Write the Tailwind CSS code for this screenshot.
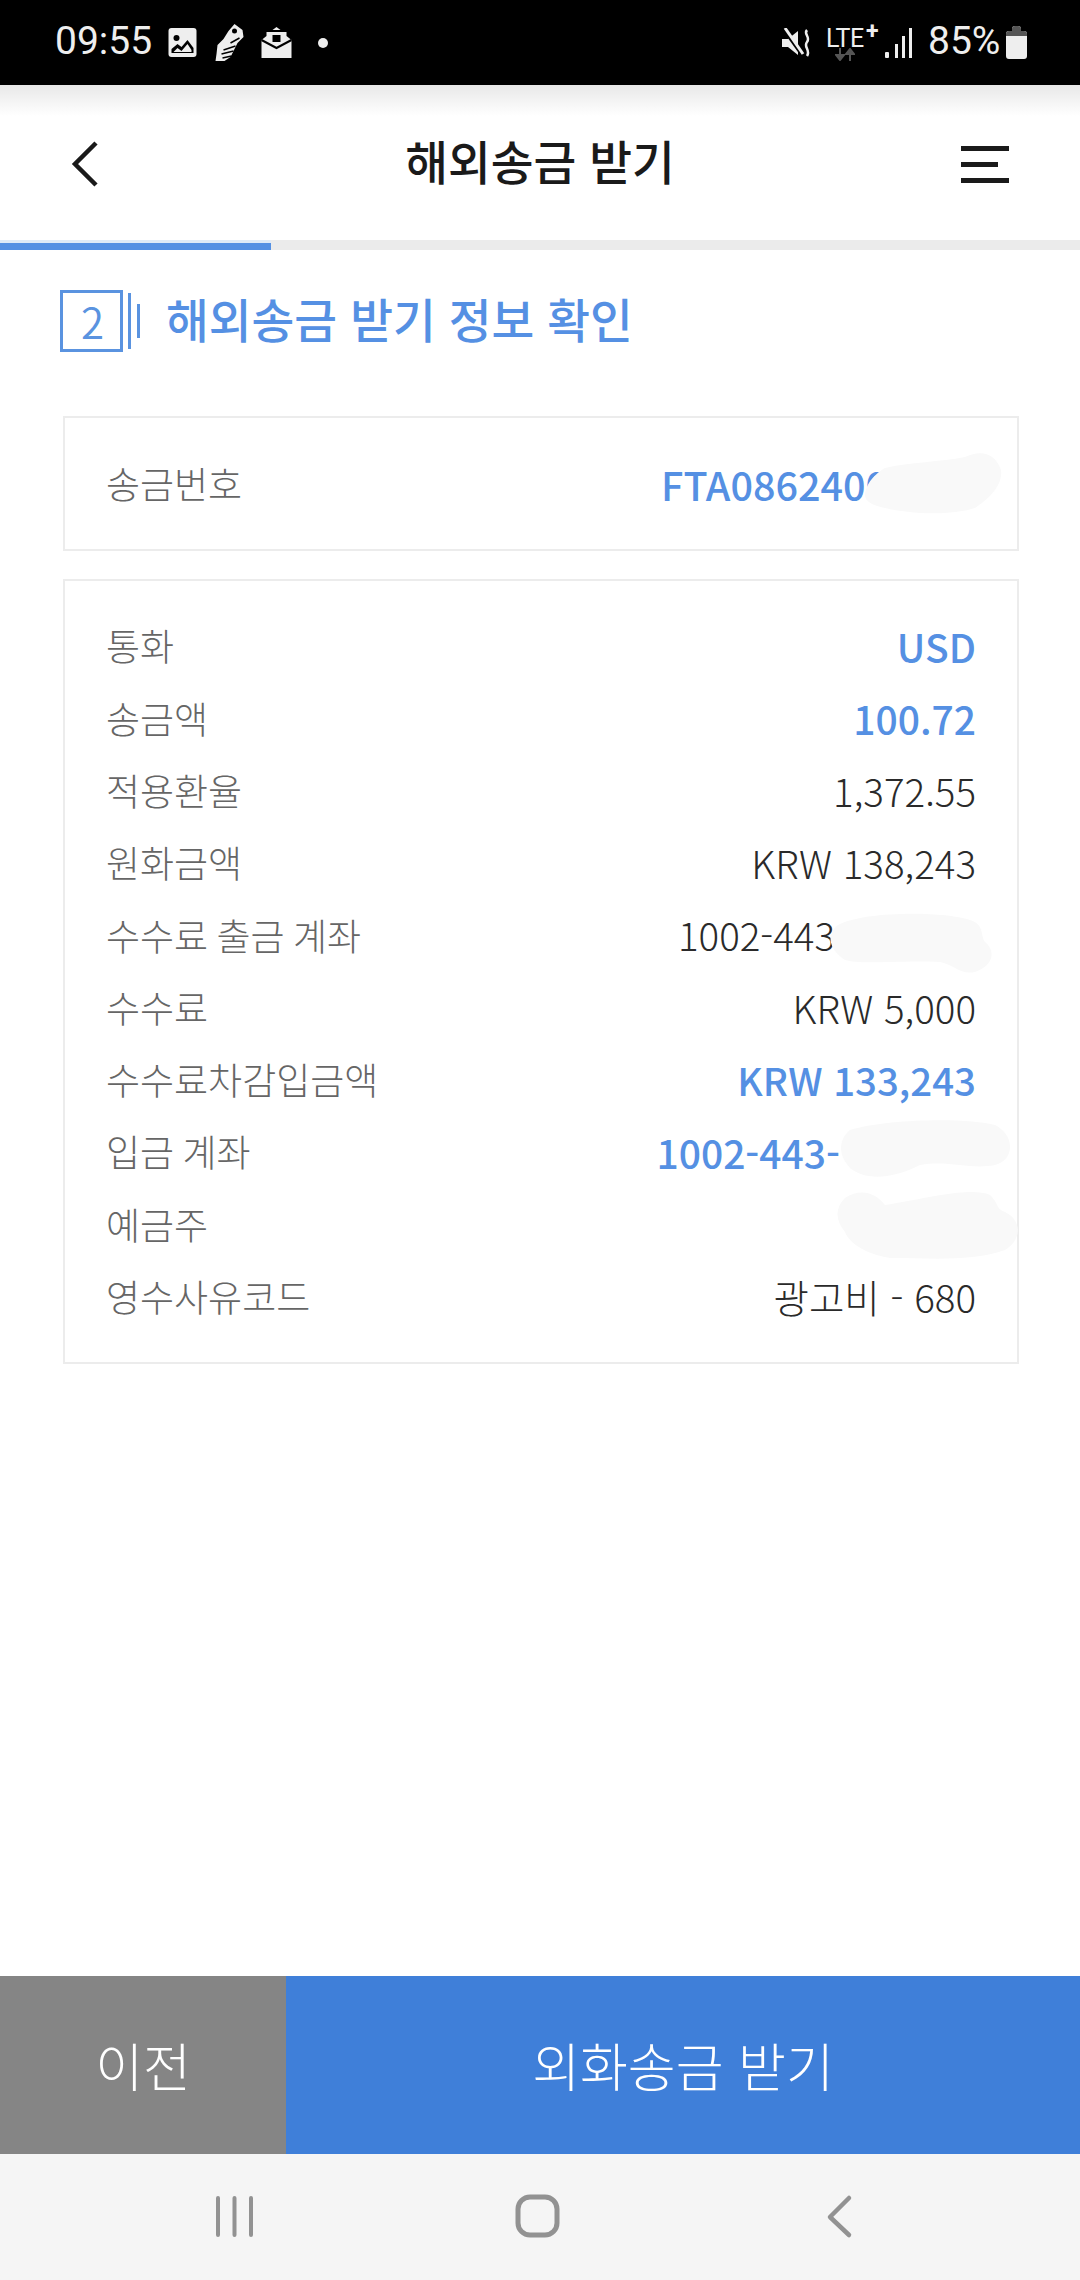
<!doctype html>
<html lang="ko">
  <head>
    <meta charset="UTF-8" />
    <meta name="viewport" content="width=device-width, initial-scale=1.0" />
    <title>해외송금 받기</title>
    <script src="https://cdn.jsdelivr.net/npm/@tailwindcss/browser@4"></script>
  </head>
  <body class="bg-white font-['Noto_Sans_CJK_KR','Noto_Sans',sans-serif]">
    <div class="relative w-[1080px] h-[2280px] flex flex-col overflow-hidden">
      <!-- Status bar -->
      <div class="h-[85px] bg-black text-[#eeeeee] flex items-center justify-between pl-[55px] pr-[53px] font-['Roboto',sans-serif] shrink-0">
        <div class="flex items-center">
          <span class="text-[39px] leading-none w-[113px] relative top-[-1px]">09:55</span>
          <svg width="29" height="29" viewBox="0 0 28 29" class="mr-[17px]">
            <rect width="28" height="29" rx="3" fill="#eeeeee" />
            <circle cx="8" cy="10" r="3" fill="#000" />
            <path d="M3 25 L3 21 L9 16 L13 19 L19 12 L25 20 L25 25 Z" fill="#000" />
            <path d="M5 24 L9 20 L13 23 L19 16 L23 22 L23 24 Z" fill="#eeeeee" />
          </svg>
          <svg width="31" height="38" viewBox="0 0 30 38" class="mr-[16px]">
            <path d="M20 0 L28 6 L29 13 L23 19 L16 33 L10 37 L1 37 L2 30 L3 21 L9 15 L14 7 Z" fill="#eeeeee" />
            <path d="M8 34 L17 32 M7 30 L19 27 M9 26 L21 22 M16 19 L25 14" stroke="#000" stroke-width="1.5" />
            <circle cx="20" cy="7" r="2.5" fill="#000" />
          </svg>
          <svg width="31" height="31" viewBox="0 0 30 31">
            <path d="M15 0 L19 3 L11 3 Z" fill="#eeeeee" />
            <path d="M0 13 L5 9 L5 5 L25 5 L25 9 L30 13 L30 31 L0 31 Z" fill="#eeeeee" />
            <path d="M0 13 L15 21 L30 13" fill="none" stroke="#000" stroke-width="2" />
            <rect x="11" y="8" width="8" height="7" fill="#000" />
          </svg>
          <span class="w-[10px] h-[10px] rounded-full bg-[#eeeeee] ml-[26px]"></span>
        </div>
        <div class="flex items-center">
          <svg width="30" height="30" viewBox="0 0 30 30" class="mr-[14px]">
            <path d="M0 11 L6 11 L16 3 L16 27 L6 19 L0 19 Z" fill="#eeeeee" />
            <path d="M2 2 L20 27" stroke="#000" stroke-width="3" />
            <path d="M3 0 L21 26" stroke="#eeeeee" stroke-width="3" />
            <path d="M25 2 C21 6 29 9 25 14 C21 19 29 22 25 28" fill="none" stroke="#eeeeee" stroke-width="2.5" />
          </svg>
          <div class="relative w-[51px] h-[32px] mr-[8px]">
            <span class="absolute left-0 top-[-1px] text-[25px] leading-[26px] tracking-[-0.5px]">LTE</span>
            <span class="absolute left-[40px] top-[-6px] text-[23px] leading-[22px] font-bold">+</span>
            <svg width="20" height="13" viewBox="0 0 20 13" class="absolute left-[9px] top-[21px]">
              <path d="M5 0 V8 M1 7 L5 12 L9 7 Z M15 13 V5 M11 6 L15 1 L19 6 Z" fill="#555555" stroke="#555555" stroke-width="2" />
            </svg>
          </div>
          <svg width="28" height="30" viewBox="0 0 28 30" class="mr-[15px]">
            <rect x="0" y="24" width="4" height="6" rx="1" fill="#eeeeee" />
            <rect x="10" y="16" width="3" height="14" fill="#eeeeee" />
            <rect x="17" y="8" width="3" height="22" fill="#eeeeee" />
            <rect x="24" y="0" width="3" height="30" fill="#eeeeee" />
          </svg>
          <span class="text-[39px] leading-none w-[78px] relative top-[-1px]">85%</span>
          <svg width="21" height="33" viewBox="0 0 21 33">
            <path d="M6 3 Q6 0 9 0 L12 0 Q15 0 15 3 L15 5 L18 5 Q21 5 21 8 L21 30 Q21 33 18 33 L3 33 Q0 33 0 30 L0 8 Q0 5 3 5 L6 5 Z" fill="#eeeeee" />
            <path d="M6 3 Q6 0 9 0 L12 0 Q15 0 15 3 L15 5 L18 5 Q21 5 21 8 L21 10 L0 10 L0 8 Q0 5 3 5 L6 5 Z" fill="#555555" />
          </svg>
        </div>
      </div>

      <!-- Header -->
      <header class="relative h-[155px] shrink-0 flex items-center justify-center bg-gradient-to-b from-[#e8e8e8] via-white via-20% to-white">
        <svg width="30" height="48" viewBox="0 0 30 48" class="absolute left-[71px] top-[55px]">
          <path d="M25 3 L4 24 L25 45" fill="none" stroke="#1a1a1a" stroke-width="4.5" />
        </svg>
        <h1 class="text-[46.500px] font-medium text-[#1a1a1a] leading-none relative top-[-2px]">해외송금 받기</h1>
        <div class="absolute left-[961px] top-[61px] w-[48px] flex flex-col gap-[11px]">
          <span class="h-[5px] bg-[#1a1a1a] w-[48px]"></span>
          <span class="h-[5px] bg-[#1a1a1a] w-[37px]"></span>
          <span class="h-[5px] bg-[#1a1a1a] w-[48px]"></span>
        </div>
      </header>

      <!-- Progress -->
      <div class="h-[10px] bg-[#ebebeb] shrink-0">
        <div class="w-[271px] h-[10px] bg-[#5590e3] border-t-[3px] border-[#dfeaf7]"></div>
      </div>

      <!-- Content -->
      <main class="flex-1 pl-[63px] pr-[61px]">
        <div class="flex items-center -ml-[3px] mt-[40px] h-[62px]">
          <div class="w-[63px] h-[62px] border-[3px] border-[#5a93e0] flex items-center justify-center pl-[2px] text-[42px] text-[#5a93e0] leading-none font-[350]">2</div>
          <span class="w-[3px] h-[56px] bg-[#5a93e0] ml-[5px]"></span>
          <span class="w-[3px] h-[34px] bg-[#5a93e0] ml-[6px]"></span>
          <h2 class="ml-[26px] text-[46.500px] font-medium text-[#5590e3] leading-none relative top-[-3px]">해외송금 받기 정보 확인</h2>
        </div>

        <section class="mt-[64px] h-[135px] border-2 border-[#ececec] flex items-center justify-between px-[41px]">
          <span class="text-[37px] text-[#666666] font-light">송금번호</span>
          <span class="text-[39.500px] font-medium text-[#5590e3] mr-[88px]">FTA0862400</span>
        </section>

        <section class="mt-[28px] h-[785px] border-2 border-[#ececec] pt-[29px] px-[41px] text-[37px] text-[#666666] font-light">
          <div class="h-[72.3px] flex items-center justify-between"><span>통화</span><span class="text-[39px] font-medium text-[#5590e3]">USD</span></div>
          <div class="h-[72.3px] flex items-center justify-between"><span>송금액</span><span class="text-[39px] font-medium text-[#5590e3]">100.72</span></div>
          <div class="h-[72.3px] flex items-center justify-between"><span>적용환율</span><span class="text-[38.500px] text-[#2a2a2a]">1,372.55</span></div>
          <div class="h-[72.3px] flex items-center justify-between"><span>원화금액</span><span class="text-[38.500px] text-[#2a2a2a]">KRW 138,243</span></div>
          <div class="h-[72.3px] flex items-center justify-between"><span class="[word-spacing:-2px]">수수료 출금 계좌</span><span class="text-[38.500px] text-[#2a2a2a] mr-[141px]">1002-443</span></div>
          <div class="h-[72.3px] flex items-center justify-between"><span>수수료</span><span class="text-[38.500px] text-[#2a2a2a]">KRW 5,000</span></div>
          <div class="h-[72.3px] flex items-center justify-between"><span>수수료차감입금액</span><span class="text-[38.400px] font-medium text-[#5590e3]">KRW 133,243</span></div>
          <div class="h-[72.3px] flex items-center justify-between"><span class="[word-spacing:-2px]">입금 계좌</span><span class="text-[39px] font-medium text-[#5590e3] mr-[136px]">1002-443-</span></div>
          <div class="h-[72.3px] flex items-center justify-between"><span>예금주</span></div>
          <div class="h-[72.3px] flex items-center justify-between"><span>영수사유코드</span><span class="text-[38.500px] text-[#2a2a2a]">광고비 - 680</span></div>
        </section>
      </main>

      <!-- Bottom buttons -->
      <div class="h-[178px] flex shrink-0 text-white text-[52px] font-light">
        <button class="w-[286px] bg-[#858585]">이전</button>
        <button class="flex-1 bg-[#3f7fd9]">외화송금 받기</button>
      </div>

      <!-- Android nav bar -->
      <nav class="relative h-[126px] bg-[#f5f5f5] shrink-0">
        <svg width="1080" height="126" viewBox="0 0 1080 126" class="absolute inset-0">
          <path d="M218 44 V81 M234.500 44 V81 M251 44 V81" stroke="#929292" stroke-width="4" stroke-linecap="round" />
          <rect x="518" y="43" width="39" height="38" rx="12" fill="none" stroke="#929292" stroke-width="5" />
          <path d="M849 44 L830 63 L849 81" fill="none" stroke="#929292" stroke-width="4.500" stroke-linecap="round" stroke-linejoin="round" />
        </svg>
      </nav>

      <!-- Redaction smears -->
      <svg width="1080" height="2280" viewBox="0 0 1080 2280" class="absolute inset-0 pointer-events-none">
        <path d="M866 490 C868 482 875 474 885 468 C910 462 940 462 965 457 C980 450 995 452 1001 470 C1003 485 990 498 975 508 C950 516 910 514 885 508 C870 505 862 500 866 490 Z" fill="#f9f9f9" />
        <path d="M838 925 C860 912 940 910 970 920 C985 925 980 935 985 942 C995 950 995 965 975 972 C960 975 955 965 940 962 C900 960 860 965 845 960 C830 950 825 935 838 925 Z" fill="#f9f9f9" />
        <path d="M850 1130 C890 1118 970 1118 995 1125 C1015 1135 1015 1160 995 1165 C970 1170 950 1160 920 1165 C890 1180 865 1180 850 1168 C838 1155 838 1140 850 1130 Z" fill="#f9f9f9" />
        <path d="M845 1198 C860 1188 875 1192 885 1205 C920 1200 970 1186 990 1195 C1000 1205 995 1208 1005 1212 C1022 1220 1022 1240 1005 1250 C970 1262 930 1258 890 1258 C870 1255 850 1245 845 1232 C835 1220 835 1208 845 1198 Z" fill="#f9f9f9" />
      </svg>
    </div>
  </body>
</html>
